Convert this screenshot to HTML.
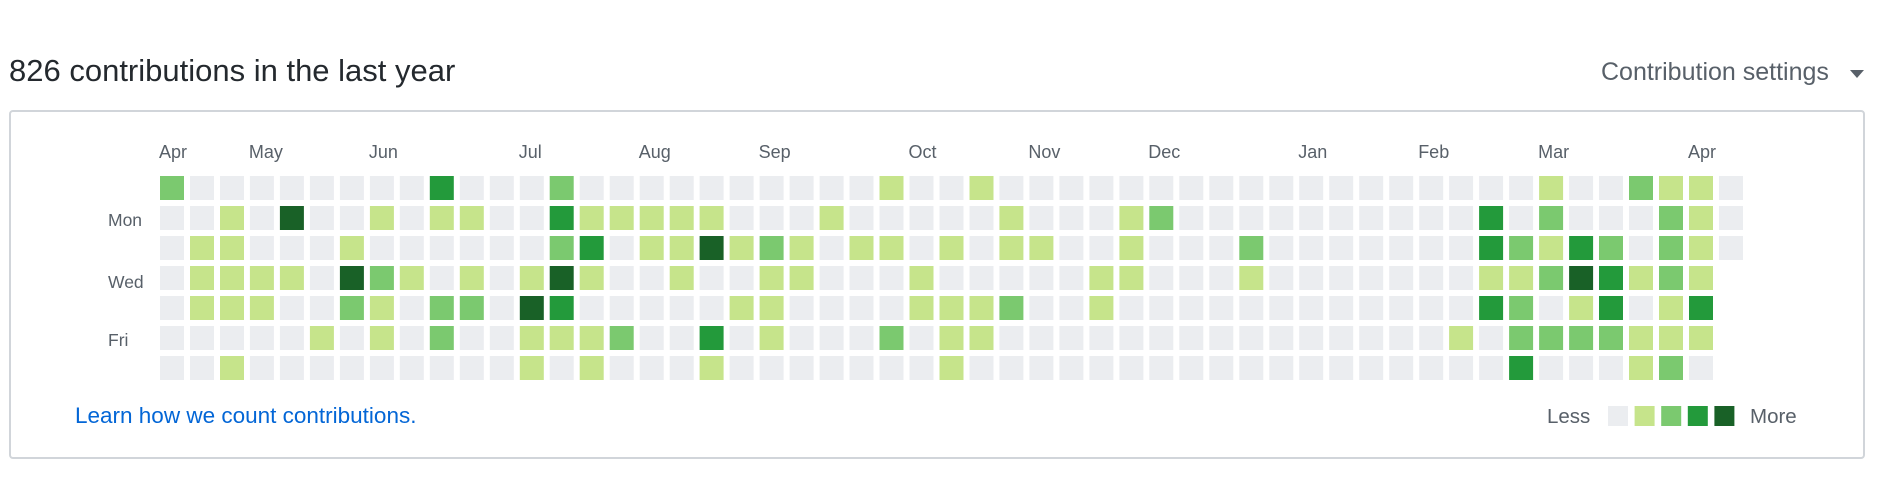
<!DOCTYPE html>
<html><head><meta charset="utf-8"><style>
html,body{margin:0;padding:0;background:#fff;width:1888px;height:502px;overflow:hidden;font-family:"Liberation Sans",sans-serif;}
.t{position:absolute;white-space:nowrap;}
</style></head><body>
<div class="t" style="left:9px;top:53px;font-size:31px;color:#24292e;line-height:36px;">826 contributions in the last year</div>
<div class="t" style="left:1601px;top:57px;font-size:25px;color:#586069;line-height:30px;">Contribution settings</div>
<svg style="position:absolute;left:1850px;top:70px" width="14" height="8"><path d="M0 0 L14 0 L7 8 Z" fill="#586069"/></svg>
<div style="position:absolute;left:9px;top:110px;width:1852px;height:345px;border:2px solid #d1d5da;border-radius:4px;"></div>
<svg id="g" style="position:absolute;left:0;top:0" width="1888" height="502" font-family="Liberation Sans, sans-serif"></svg>
<div class="t" style="left:75px;top:402px;font-size:22.5px;color:#0366d6;line-height:28px;">Learn how we count contributions.</div>
<div class="t" style="left:1547px;top:404px;font-size:20.5px;color:#586069;line-height:26px;">Less</div>
<div class="t" style="left:1750px;top:404px;font-size:20.5px;color:#586069;line-height:26px;">More</div>
<script>
var rows=[
"200000000300020000"+"000000100100000000"+"00000000001002110",
"001040010110031111"+"100010000010001200"+"00000000302000210",
"011000100000023011"+"412101101011001000"+"20000000321320210",
"011110421010141001"+"001100010000011000"+"1000000011243121",
"011100210220430000"+"011000011120010000"+"0000000032013013",
"000001010200111200"+"301000201100000000"+"0000000102222111",
"001000000000101000"+"100000001000000000"+"0000000003000120"];
var col=["#ebedf0","#c6e48b","#7bc96f","#239a3b","#196127"];
var s="";
for(var r=0;r<7;r++){for(var c=0;c<rows[r].length;c++){var v=+rows[r][c];
s+='<rect x="'+(160+c*29.98).toFixed(1)+'" y="'+(176+r*30)+'" width="24" height="24" fill="'+col[v]+'"/>';}}
var m=[["Apr",0],["May",3],["Jun",7],["Jul",12],["Aug",16],["Sep",20],["Oct",25],["Nov",29],["Dec",33],["Jan",38],["Feb",42],["Mar",46],["Apr",51]];
m.forEach(function(a){s+='<text x="'+(160+a[1]*29.98-1).toFixed(1)+'" y="158" font-size="18" fill="#586069">'+a[0]+'</text>';});
[["Mon",226],["Wed",288],["Fri",346]].forEach(function(a){s+='<text x="108" y="'+a[1]+'" font-size="17.5" fill="#586069">'+a[0]+'</text>';});
for(var i=0;i<5;i++){s+='<rect x="'+(1608+i*26.6).toFixed(1)+'" y="406" width="20" height="20" fill="'+col[i]+'"/>';}
document.getElementById("g").innerHTML=s;
</script>
</body></html>
